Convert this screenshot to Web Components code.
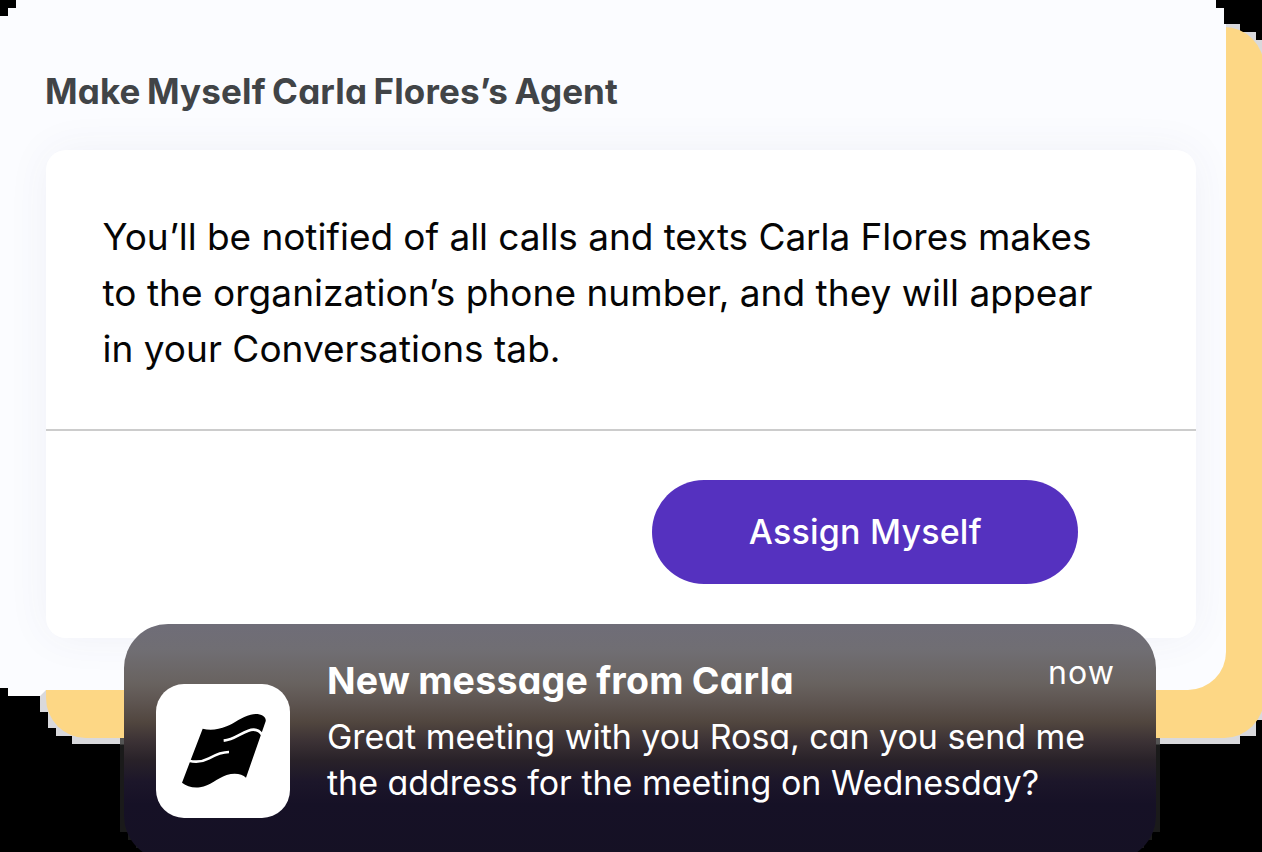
<!DOCTYPE html>
<html lang="en">
<head>
<meta charset="utf-8">
<title>Assign agent</title>
<style>
html,body{margin:0;background:#000;overflow:hidden}
body{width:1262px;height:852px;font-family:"Inter","Liberation Sans",sans-serif}
</style>
</head>
<body>
<app-scene>
  <agent-dialog>
    <text-line slot="title" measure="570">Make Myself Carla Flores’s Agent</text-line>
    <text-line measure="986">You’ll be notified of all calls and texts Carla Flores makes</text-line>
    <text-line measure="987">to the organization’s phone number, and they will appear</text-line>
    <text-line measure="455">in your Conversations tab.</text-line>
    <pill-button slot="action"><text-line measure="230">Assign Myself</text-line></pill-button>
  </agent-dialog>
  <push-notification slot="overlay">
    <flag-icon slot="icon"></flag-icon>
    <text-line slot="title" measure="464">New message from Carla</text-line>
    <text-line slot="time" measure="64">now</text-line>
    <text-line measure="755">Great meeting with you Rosa, can you send me</text-line>
    <text-line measure="709">the address for the meeting on Wednesday?</text-line>
  </push-notification>
</app-scene>
<script>
class Base extends HTMLElement {
  constructor() {
    super();
    this.attachShadow({mode: 'open'}).innerHTML = this.constructor.html;
  }
}

// Stage: yellow backing card, dialog, and the notification over them.
customElements.define('app-scene', class extends Base {
  static html = `<style>
    :host{display:block;position:relative;width:1262px;height:852px;overflow:hidden;background:#000}
    .edge{position:absolute;inset:0;background:#d9d9dc;clip-path:polygon(1200px 24px,1240px 24px,1240px 32px,1256px 32px,1256px 40px,1262px 40px,1262px 720px,1256px 720px,1256px 736px,1240px 736px,1240px 744px,72px 744px,72px 736px,56px 736px,56px 728px,48px 728px,48px 712px,40px 712px,40px 600px,1200px 600px)}
    .back{position:absolute;left:46px;top:27px;width:1218px;height:711px;border-radius:40px;background:#fdd785}
    .base{position:absolute;inset:0;background:#fff;clip-path:polygon(0 400px,46px 400px,46px 690px,40px 696px,8px 696px,8px 688px,0 688px)}
    .front{position:relative}
    .over{position:absolute;left:120px;top:624px}
  </style><div class="edge"></div><div class="back"></div><div class="base"></div>
  <div class="front"><slot></slot></div><div class="over"><slot name="overlay"></slot></div>`;
});

// One line of copy whose tracking is set so that it spans its measure.
customElements.define('text-line', class extends Base {
  static html = `<style>:host{display:block;white-space:nowrap;font-feature-settings:var(--alt,normal)}span{display:inline-block}</style><span><slot></slot></span>`;
  connectedCallback() {
    requestAnimationFrame(() => this.fit());
    this.fit();
  }
  fit() {
    const span = this.shadowRoot.querySelector('span');
    const n = this.textContent.length;
    span.style.letterSpacing = '0px';
    const gap = (+this.getAttribute('measure') + 3 - span.getBoundingClientRect().width) / n;
    span.style.letterSpacing = gap.toFixed(3) + 'px';
  }
});

customElements.define('agent-dialog', class extends Base {
  static html = `<style>
    :host{display:block;box-sizing:border-box;width:1226px;height:690px;padding:67px 30px 0 46px;border-radius:0 0 38px 0;overflow:hidden;
      background:#fbfcff;clip-path:polygon(16px 0,1216px 0,1216px 8px,1224px 8px,1224px 24px,1226px 24px,1226px 690px,8px 690px,8px 688px,0 688px,0 16px,8px 16px,8px 8px,16px 8px)}
    header{height:83px;font-size:35px;font-weight:680;line-height:48px;color:#414447;margin-left:-1px;word-spacing:-2px;--alt:"cv11"}
    .paper{height:488px;border-radius:20px;background:#fff;box-shadow:0 0 44px rgba(70,70,120,.06)}
    .copy{box-sizing:border-box;height:281px;padding:59px 0 0 56.5px;border-bottom:2px solid #ccc;font-size:37px;line-height:56px;color:#050505}
    footer{display:flex;justify-content:flex-end;padding:49px 118.5px 0 0}
  </style><header><slot name="title"></slot></header>
  <div class="paper"><div class="copy"><slot></slot></div><footer><slot name="action"></slot></footer></div>`;
});

customElements.define('pill-button', class extends Base {
  static html = `<style>:host{display:block}
    button{all:unset;box-sizing:border-box;display:flex;justify-content:center;width:425.5px;height:104px;padding-left:1px;border-radius:52px;background:#5531bf;color:#fff;font-size:34px;font-weight:500;line-height:104px;--alt:"cv11"}
  </style><button><slot></slot></button>`;
});

customElements.define('push-notification', class extends Base {
  static html = `<style>
    :host{display:block;position:relative;width:1040px;height:228px;color:#fff;--alt:"cv11"}
    .fringe{position:absolute;inset:0;background:linear-gradient(#555 120px,#1a1a1a 121px);clip-path:polygon(0 114px,1040px 114px,1040px 208px,1032px 208px,1032px 216px,1024px 216px,1024px 224px,1016px 224px,1016px 228px,24px 228px,24px 224px,16px 224px,16px 216px,8px 216px,8px 208px,0 208px)}
    .card{position:relative;display:flex;box-sizing:border-box;width:1032px;height:236px;margin-left:4px;border-radius:44px;padding:0 42px 0 32px;
      background:linear-gradient(#6f6d78 0,#706e73 26px,#68625f 60px,#5e5551 78px,#51463f 98px,#3d3336 116px,#292229 136px,#1c162a 158px,#161126 180px,#151124 236px)}
    .icon{margin-top:60px;width:134px;height:134px}
    .text{margin:33px 0 0 37px;flex:1}
    .title{font-size:37.5px;font-weight:700;line-height:48px;height:57px;word-spacing:-1px}
    .body{font-size:34px;line-height:46px}
    .time{position:absolute;right:42px;top:26px;font-size:32px;line-height:46px;width:66px}
  </style><div class="fringe"></div><div class="card"><div class="icon"><slot name="icon"></slot></div>
  <div class="text"><div class="title"><slot name="title"></slot></div><div class="body"><slot></slot></div></div>
  <div class="time"><slot name="time"></slot></div></div>`;
});

customElements.define('flag-icon', class extends Base {
  static html = `<style>:host{display:block;width:134px;height:134px;border-radius:28px;background:#fff}svg{display:block}</style>
  <svg width="134" height="134" viewBox="18 27 402 402"><path d="M158 161C178 167 204 165 230 154C255 143 275 126 302 119C328 113 350 123 347 139L288 308C276 296 253 293 230 300C200 310 180 333 150 337C128 340 110 334 96 323Z"/><path d="M117 257C140 263 158 260 177 250C197 239 215 231 237 231M221 197C252 194 267 177 295 167C312 161 328 166 337 180" fill="none" stroke="#fff" stroke-width="8"/></svg>`;
});
</script>
</body>
</html>
